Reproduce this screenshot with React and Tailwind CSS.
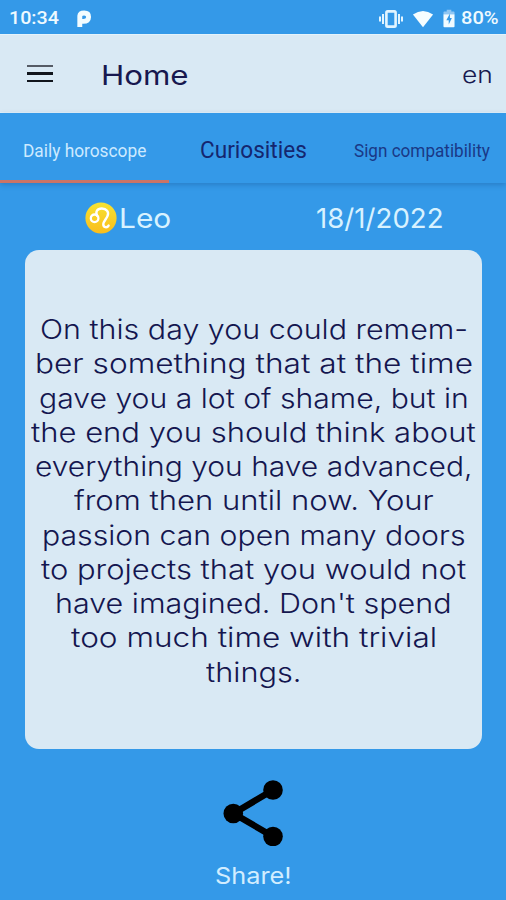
import { useLayoutEffect, useRef, useState } from "react";

// Stretches a single line of text horizontally to the width of its box.
function Fit({ children, className }) {
  const box = useRef(null);
  const text = useRef(null);
  const [scale, setScale] = useState(1);
  useLayoutEffect(() => {
    setScale(box.current.clientWidth / text.current.offsetWidth);
  }, []);
  return (
    <div ref={box} className={`whitespace-nowrap text-left ${className}`}>
      <span ref={text} className="inline-block origin-left" style={{ transform: `scaleX(${scale})` }}>
        {children}
      </span>
    </div>
  );
}

const lines = [
  ["On this day you could remem-", "w-[428px]"],
  ["ber something that at the time", "w-[438px]"],
  ["gave you a lot of shame, but in", "w-[430px]"],
  ["the end you should think about", "w-[445px]"],
  ["everything you have advanced,", "w-[437px]"],
  ["from then until now. Your", "w-[360px]"],
  ["passion can open many doors", "w-[423px]"],
  ["to projects that you would not", "w-[425px]"],
  ["have imagined. Don't spend", "w-[397px]"],
  ["too much time with trivial", "w-[366px]"],
  ["things.", "w-[96px]"],
];

function StatusBar() {
  return (
    <div className="flex h-[34px] items-center pl-[9px] pr-[7px] pt-[3px] text-[18.5px] font-medium text-[#eefaff]">
      <Fit className="w-[50px]">10:34</Fit>
      <svg className="ml-[17px] h-[18px] w-[17px]" viewBox="0 0 17 18" fill="none">
        <path d="M3.8 17V6Q4 3 8.2 3Q12.6 3 12.6 7Q12.6 11.4 7.4 11.4H4" stroke="#f3fcff" strokeWidth="4.9" />
      </svg>
      <svg className="ml-auto h-[18px] w-[24px]" viewBox="0 0 24 18">
        <path d="M1 6.5v5M4 4v10M20 4v10M23 6.5v5" stroke="#e2f5ff" strokeWidth="2" />
        <rect x="7.4" y="1.4" width="9.2" height="15.2" rx="1.2" fill="none" stroke="#e2f5ff" strokeWidth="2.6" />
      </svg>
      <svg className="ml-[9px] h-[18px] w-[22px]" viewBox="0 0 24 18">
        <path d="M12 18 1 4.2Q12-3.6 23 4.2Z" fill="#f5fdff" />
      </svg>
      <svg className="ml-[9px] h-[19px] w-[12px]" viewBox="0 0 13 19">
        <path d="M4 0h5v2h2.5q1 0 1 1v2H.5V3q0-1 1-1H4z" fill="#8fc6f3" />
        <path d="M.5 5h12v13q0 1-1 1h-10q-1 0-1-1z" fill="#f1fbff" />
        <path d="M7.5 4 3.6 11.5h2.6V16l3.4-7H7.5z" fill="#3499e8" />
      </svg>
      <Fit className="ml-[6px] w-[38px]">80%</Fit>
    </div>
  );
}

function LeoBadge() {
  return (
    <svg className="h-8 w-8 shrink-0" viewBox="0 0 32 32" fill="none">
      <defs>
        <linearGradient id="gold" x1="0" y1="0" x2="0" y2="1">
          <stop offset="0" stopColor="#f6e332" />
          <stop offset="1" stopColor="#fabd1c" />
        </linearGradient>
      </defs>
      <circle cx="16" cy="16" r="15.6" fill="url(#gold)" />
      <circle cx="9.6" cy="16.3" r="3.8" stroke="#fff" strokeWidth="2.3" />
      <path
        d="M12.3 14C10 9.5 12.2 6.5 16.8 6.5C21.5 6.5 24.3 10 22.5 14C21.2 17 18.5 19.5 18.3 22C18.1 25.5 22 26.3 23.6 23.6"
        stroke="#fff"
        strokeWidth="2.4"
        strokeLinecap="round"
      />
    </svg>
  );
}

export default function App() {
  return (
    <div className="flex h-[900px] w-[506px] flex-col overflow-hidden bg-[#3499e8] font-['Roboto',sans-serif]">
      <StatusBar />
      <header className="flex h-[79px] items-center border-y border-[#e4f3fb] bg-[#d9e9f4] pl-[27px] pr-[13px] font-['Inter',sans-serif] text-[#17184f]">
        <div className="flex w-[26px] flex-col gap-[5px]">
          <div className="h-[2.5px] bg-[#555b65]" />
          <div className="h-[2.5px] bg-[#11151c]" />
          <div className="h-[2.5px] bg-[#11151c]" />
        </div>
        <Fit className="ml-[48px] mt-[5px] w-[88px] text-[27px] leading-[34px]">Home</Fit>
        <Fit className="ml-auto mt-[3px] w-[31px] text-[23px] font-[350] leading-[30px]">en</Fit>
      </header>
      <nav className="relative flex h-[70px] items-center bg-[#3499e8] text-[#14266f] shadow-[0_2px_5px_rgba(20,70,130,0.32)]">
        <div className="flex h-full w-[169px] items-center justify-center border-b-[3px] border-[#cb7466] pt-[7px] text-[18px] text-[#cdeaff]">
          <Fit className="w-[123px]">Daily horoscope</Fit>
        </div>
        <div className="flex w-[168px] justify-center pt-[6px] text-[23px]">
          <Fit className="w-[107px]">Curiosities</Fit>
        </div>
        <div className="flex w-[169px] justify-center pt-[4px] text-[18px] text-[#1a3886]">
          <Fit className="w-[136px]">Sign compatibility</Fit>
        </div>
      </nav>
      <div className="flex h-[67px] items-center pl-[85px] pr-[62px] pt-[3px] font-['Inter',sans-serif] text-[27px] text-[#d8f2ff]">
        <LeoBadge />
        <Fit className="ml-[2px] mt-[2px] w-[52px]">Leo</Fit>
        <Fit className="ml-auto mt-[2px] w-[128px]">18/1/2022</Fit>
      </div>
      <main className="ml-[25px] flex h-[499px] w-[457px] shrink-0 flex-col items-center rounded-[14px] bg-[#d9e9f4] pt-[62px] font-['Inter',sans-serif] text-[27.5px] font-light leading-[34.25px] text-[#14164f]">
        {lines.map(([text, width]) => (
          <Fit key={text} className={`h-[34.25px] ${width}`}>{text}</Fit>
        ))}
      </main>
      <div className="flex flex-col items-center pt-[31px] font-['Inter',sans-serif] text-[#d2edff]">
        <svg className="h-[66px] w-[60px]" viewBox="0 0 60 66">
          <path d="M50 10 10.5 33.5 50 56.5" fill="none" stroke="#000" strokeWidth="6.5" />
          <circle cx="50" cy="10" r="9.8" />
          <circle cx="10.3" cy="33.5" r="9.8" />
          <circle cx="50" cy="56.5" r="9.8" />
        </svg>
        <Fit className="mt-[15px] w-[77px] text-[23px] leading-[30px]">Share!</Fit>
      </div>
    </div>
  );
}
